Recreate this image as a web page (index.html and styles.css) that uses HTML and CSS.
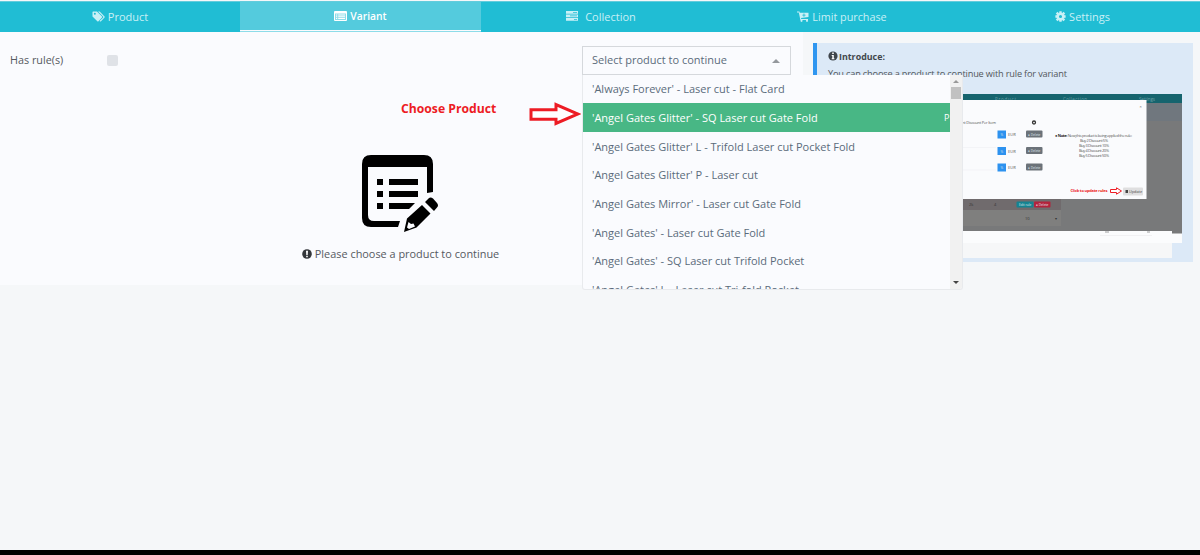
FILE: index.html
```
<!DOCTYPE html>
<html lang="en">
<head>
<meta charset="utf-8">
<title>Variant rules</title>
<link rel="stylesheet" href="styles.css">
</head>
<body>
<div class="app">
  <nav class="tabs">
    <a class="tab tab-product"><svg class="icon-tags" viewBox="0 0 13 11"><path fill="currentColor" fill-rule="evenodd" d="M1 .5h4L10 5.400q.6.600 0 1.200L6.500 10.200q-.6.500-1.200 0L.5 5.500V1zM2.800 1.800a1 1 0 1 0 .1 2 1 1 0 0 0-.1-2"/><path fill="currentColor" d="M6 .5h1.700L12.500 5.400q.6.600 0 1.200L9 10.200q-.6.500-1.200 0L7.500 9.900L11 6.700q.6-.700 0-1.300z"/></svg><span>Product</span></a>
    <a class="tab active"><svg class="icon-list" viewBox="0 0 13 10"><path fill="currentColor" fill-opacity=".35" d="M1 1h11v8H1z"/><path fill="currentColor" fill-rule="evenodd" d="M1 0h11q1 0 1 1v8q0 1-1 1H1Q0 10 0 9V1Q0 0 1 0M1 2.500v6.500h11V2.500zM2 3.500h1.200v1H2zm2.200 0H11v1H4.200zM2 5.300h1.200v1H2zm2.200 0H11v1H4.200zM2 7.100h1.200v1H2zm2.200 0H11v1H4.200z"/></svg><span>Variant</span></a>
    <a class="tab tab-collection"><svg class="icon-server" viewBox="0 0 12 10"><path fill="currentColor" fill-rule="evenodd" d="M0 0h12v2.700H0zM7 1v.7h4V1zM0 3.500h12v2.700H0zM4 4.500v.7h7v-.7zM0 7h12v2.700H0zM8 8v.7h3V8z"/></svg><span>Collection</span></a>
    <a class="tab tab-limit"><svg class="icon-cart" viewBox="0 0 12 11"><path fill="currentColor" fill-rule="evenodd" d="M0 .5h2.400l.4 1.300H11.500v4.300L4 7.100l.2.800H11v1H3.400L1.800 1.500H0zM6.500 2.500v1.200H5.300v.8h1.200v1.200h.9V4.500h1.200v-.8H7.400V2.500z"/><circle cx="4.500" cy="9.800" r="1.100" fill="currentColor"/><circle cx="10" cy="9.800" r="1.100" fill="currentColor"/></svg><span>Limit purchase</span></a>
    <a class="tab tab-settings"><svg class="icon-gear" viewBox="0 0 12 12"><circle cx="6" cy="6" r="3.100" fill="none" stroke="currentColor" stroke-width="2.800"/><path stroke="currentColor" stroke-width="2.600" d="M6 .4v2M6 9.600v2M.4 6h2M9.600 6h2M1.800 1.800l1.500 1.500M8.700 8.700l1.500 1.500M10.200 1.800L8.700 3.300M3.300 8.700l-1.500 1.500"/></svg><span>Settings</span></a>
  </nav>
  <div class="content">
    <main class="panel">
      <div class="rule-row">
        <label class="rule-label">Has rule(s)</label>
        <span class="checkbox"></span>
        <div class="select">
          <div class="select-box"><span>Select product to continue</span><i class="caret-up"></i></div>
          <div class="menu">
            <ul class="options">
              <li>'Always Forever' - Laser cut - Flat Card</li>
              <li class="highlight"><span>'Angel Gates Glitter' - SQ Laser cut Gate Fold</span><b class="hint">P</b></li>
              <li>'Angel Gates Glitter' L - Trifold Laser cut Pocket Fold</li>
              <li>'Angel Gates Glitter' P - Laser cut</li>
              <li>'Angel Gates Mirror' - Laser cut Gate Fold</li>
              <li>'Angel Gates' - Laser cut Gate Fold</li>
              <li>'Angel Gates' - SQ Laser cut Trifold Pocket</li>
              <li>'Angel Gates' L - Laser cut Tri-fold Pocket</li>
            </ul>
            <div class="scrollbar"><i class="scroll-up"></i><i class="thumb"></i><i class="scroll-down"></i></div>
          </div>
        </div>
      </div>
      <div class="callout"><span>Choose Product</span><svg class="callout-arrow" viewBox="0 0 52 24"><path d="M2 7.700h25V2.500L49 12 27 21.500v-4.200H2z" fill="#fff" stroke="#ed1c24" stroke-width="3"/></svg></div>
      <div class="empty">
        <svg class="form-icon" viewBox="0 0 77 78">
          <path fill-rule="evenodd" d="M9 0h53q9 0 9 9v28l-6 1V12H6v48q0 6 6 6h26l-2 6H9q-9 0-9-9V9Q0 0 9 0"/>
          <path d="M15 24h6v6h-6zM27 24h29v6H27zM15 36h6v6h-6zM27 36h29v6H27zM15 48h6v6h-6zM27 48h26l-6 6H27z"/>
          <path fill-rule="evenodd" d="M60 50l8.500 8.500-14 14-12.500 4.500 3-13.500zM46.500 67l-1.500 5.500 2 1.500 6-2.500-1.500-3-2.500.5z"/>
          <path d="M63 47l3.500-3.500q2-2 4.500 0l4 4.500q2 2.500 0 4.500l-3 3.500z"/>
        </svg>
        <p class="empty-text"><svg class="icon-alert" viewBox="0 0 10 10"><circle cx="5" cy="5" r="4.800" fill="#33363a"/><path d="M4 1.700h2L5.700 6H4.300zM4.200 6.800h1.600v1.500H4.200z" fill="#fff"/></svg><span>Please choose a product to continue</span></p>
      </div>
    </main>
    <aside class="side">
      <section class="intro">
        <h2><svg class="icon-info" viewBox="0 0 10 10"><circle cx="5" cy="5" r="4.600" fill="#3f454b"/><path d="M4.200 1.500h1.600v1.400H4.200zM3.700 4h2.100v3.300h.6v1H3.700v-1h.6V5h-.6z" fill="#fff"/></svg><span>Introduce:</span></h2>
        <p>You can choose a product to continue with rule for variant</p>
        <svg class="preview" viewBox="828 94 354 164">
          <path d="M828 231h354v12h-10v15H828z" fill="#f6f7f8"/>
          <path d="M828 231h354v12H828z" fill="#fbfcfd"/>
          <path d="M1100 235.500h52" stroke="#ededee" stroke-width=".7"/>
          <path d="M1105 232h4M1147 232h3" stroke="#777" stroke-width=".7"/>
          <path d="M828 94h354v139.500h-10V231H828z" fill="#78797a"/>
          <path d="M828 94h354v9H828z" fill="#16646e"/>
          <path d="M1146 103h36v18h-36z" fill="#70777e"/>
          <g class="pt-nav"><text x="995" y="101" textLength="21">Product</text><text x="1063" y="101" textLength="24">Collection</text><text x="1139" y="101" textLength="16">Settings</text></g>
          <path d="M828 199h233v11H828z" fill="#706b6d"/>
          <path d="M828 210h233v16H828z" fill="#7f7f7e"/>
          <path d="M828 100h318.500v99H828z" fill="#fafbfd"/>
          <g class="pt-small">
            <text x="1139.500" y="108">×</text>
            <text x="960" y="123.500" textLength="36">ent Discount Per Item</text>
            <text x="1008" y="136">EUR</text><text x="1008" y="152.500">EUR</text><text x="1008" y="169">EUR</text>
            <text x="1055" y="137" textLength="77"><tspan class="pt-note">● Note:</tspan> Now,this product is being applied the rule:</text>
            <text x="1080" y="142" textLength="28">Buy 2 Discount 5%</text>
            <text x="1079" y="147" textLength="30">Buy 3 Discount 10%</text>
            <text x="1079" y="152" textLength="30">Buy 4 Discount 20%</text>
            <text x="1079" y="157" textLength="30">Buy 5 Discount 50%</text>
          </g>
          <g class="pt-dim"><text x="969" y="206">2k</text><text x="994" y="206">4</text><text x="1025" y="220">10</text><text x="1055" y="220">▾</text></g>
          <circle cx="1034" cy="122.500" r="1.500" fill="none" stroke="#333" stroke-width="1.300"/>
          <path d="M963 147.500h33M963 170h33" stroke="#eff1f4" stroke-width=".7"/>
          <g fill="#2d92ef"><path d="M997.500 130.500h8.500v8h-8.500zM997.500 147h8.500v8h-8.500zM997.500 163.500h8.500v8h-8.500z"/></g>
          <g fill="#6b7279"><rect x="1026" y="130.500" width="16.500" height="7" rx="1"/><rect x="1026" y="147" width="16.500" height="7" rx="1"/><rect x="1026" y="163.500" width="16.500" height="7" rx="1"/></g>
          <rect x="1016.500" y="201.500" width="17" height="6" rx="1" fill="#158391"/><rect x="1034" y="201.500" width="16.500" height="6" rx="1" fill="#b3223c"/>
          <g class="pt-button"><text x="1000.500" y="136">%</text><text x="1000.500" y="152.500">%</text><text x="1000.500" y="169">%</text><text x="1028" y="135.500">● Delete</text><text x="1028" y="152">● Delete</text><text x="1028" y="168.500">● Delete</text><text x="1019" y="206">Edit rule</text><text x="1036" y="206">● Delete</text></g>
          <text class="pt-callout" x="1070.500" y="192" textLength="37">Click to update rules</text>
          <path d="M1110.500 189.500h6v-1.700l5 3.200-5 3.200v-1.700h-6z" fill="#fff" stroke="#ed1c24"/>
          <rect x="1123" y="187.500" width="20" height="8" rx="1" fill="#dfdfe0"/>
          <path d="M1125.500 190h2.500v3h-2.500z" fill="#444"/>
          <text class="pt-update" x="1129" y="193">Update</text>
        </svg>
      </section>
    </aside>
  </div>
  <footer class="bottom-bar"></footer>
</div>
</body>
</html>
```
FILE: styles.css
```
* { box-sizing: border-box; }
body { margin: 0; background: #f5f7f9; font-family: "Open Sans", "Noto Sans", sans-serif; font-size: 11px; color: #55595f; }
.app { display: flex; flex-direction: column; width: 1200px; height: 555px; padding-top: 1px; overflow: hidden; }
.tabs { display: grid; grid-template-columns: 240px 241px 240px 240px 239px; height: 30.500px; flex: none; background: #20bdd4; border-top: 1px solid #62ccdc; }
.tab { display: flex; align-items: center; justify-content: center; gap: 3px; padding-bottom: 1.500px; color: #c9f0f6; white-space: nowrap; }
.tab.active { background: #54cbdd; color: #fff; height: 28px; padding-bottom: 0; box-shadow: 0 1.500px 0 #fafbfe; font-weight: 600; font-size: 10.300px; }
.tab.tab-collection { gap: 7px; }
.tab.tab-limit { font-size: 10.800px; padding-left: 2px; }
.tab.tab-settings { padding-left: 4px; }
.icon-tags { width: 13px; height: 11px; }
.icon-list { width: 13px; height: 10px; }
.icon-server { width: 12px; height: 10px; }
.icon-cart { width: 12px; height: 11px; }
.icon-gear { width: 11px; height: 11px; }
.content { display: flex; flex: 1; align-items: flex-start; }
.panel { width: 803px; height: 253.500px; flex: none; background: #fafbfe; padding-top: 14.500px; }
.rule-row { display: flex; align-items: center; height: 28px; padding-left: 10px; }
.rule-label { width: 97px; font-size: 10.800px; line-height: 15px; margin-top: -1px; }
.checkbox { width: 11px; height: 11px; border-radius: 2px; background: #dfe2e7; }
.select { position: relative; width: 209px; height: 29px; margin-left: 464px; color: #5b6b7b; }
.select-box { display: flex; align-items: center; justify-content: space-between; height: 29px; padding: 0 10px 1px 9px; border: 1px solid #d5d8dc; background: #fafbfe; }
.caret-up { margin-top: 2px; border: 4px solid transparent; border-top: 0; border-bottom: 4px solid #94989d; }
.menu { position: absolute; z-index: 2; left: 0; top: 29px; width: 381px; height: 215px; display: flex; overflow: hidden; background: #fafbfe; border: 1px solid #e8eaed; border-top: 0; border-radius: 0 0 3px 3px; }
.options { flex: 1; margin: 0; padding: 0; list-style: none; }
.options li { display: flex; align-items: center; justify-content: space-between; height: 28.700px; padding-left: 9px; white-space: nowrap; }
.options .highlight { background: #48b785; color: #fff; font-weight: 500; }
.hint { font-size: 9px; font-weight: 400; width: 6px; overflow: hidden; }
.scrollbar { width: 12px; display: flex; flex-direction: column; align-items: center; background: #f1f1f1; padding: 5px 1px; }
.scroll-up { border: 3px solid transparent; border-top: 0; border-bottom-color: #999; }
.thumb { width: 10px; height: 12px; margin-top: 4px; background: #c1c1c1; }
.scroll-down { margin-top: auto; border: 3px solid transparent; border-bottom: 0; border-top-color: #444; }
.callout { display: flex; align-items: center; height: 24px; margin: 28px 0 0 401px; color: #ed1c24; font-weight: 700; font-size: 12.200px; }
.callout span { width: 128px; margin-top: -12px; }
.callout-arrow { width: 52px; height: 24px; }
.empty { display: flex; flex-direction: column; align-items: center; padding: 29px 2px 0 0; }
.form-icon { width: 77px; height: 78px; }
.empty-text { display: flex; align-items: center; gap: 3px; margin: 13px 0 0; font-size: 10.900px; line-height: 16px; }
.icon-alert, .icon-info { width: 10px; height: 10px; }
.side { flex: 1; padding: 11.500px 7px 0 10px; }
.intro { height: 219px; padding: 6px 11px 0; border-left: 4px solid #2f96f0; background: #dce9f7; color: #53575b; }
.intro h2 { display: flex; align-items: center; gap: 1px; height: 14px; margin: 0; font-size: 8.900px; font-weight: 700; color: #42474d; }
.intro p { height: 14px; margin: 4px 0 13px; line-height: 14px; font-size: 9.200px; letter-spacing: -.17px; white-space: nowrap; }
.preview { display: block; width: 354px; height: 164px; }
.pt-nav { font-size: 4.500px; fill: #6aa0a7; }
.pt-small { font-size: 4px; fill: #555; }
.pt-note { font-weight: 700; fill: #222; }
.pt-dim { font-size: 4px; fill: #333; }
.pt-button { font-size: 3.200px; fill: #dfe6ea; }
.pt-callout { font-size: 4px; font-weight: 700; fill: #ed1c24; }
.pt-update { font-size: 3.800px; fill: #444; }
.bottom-bar { height: 5px; flex: none; background: #000; }
```
